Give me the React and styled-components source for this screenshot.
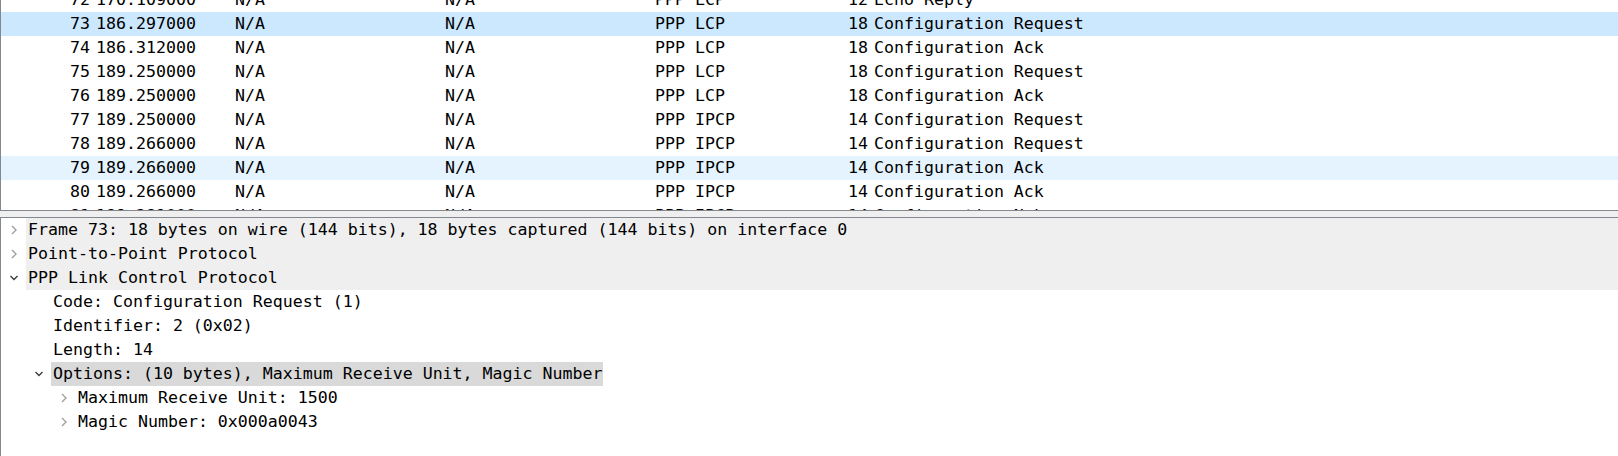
import React from "react";
import styled, { createGlobalStyle } from "styled-components";

const packets = [
  { no: 72, time: "170.109000", src: "N/A", dst: "N/A", proto: "PPP LCP", len: 12, info: "Echo Reply" },
  { no: 73, time: "186.297000", src: "N/A", dst: "N/A", proto: "PPP LCP", len: 18, info: "Configuration Request", state: "selected" },
  { no: 74, time: "186.312000", src: "N/A", dst: "N/A", proto: "PPP LCP", len: 18, info: "Configuration Ack" },
  { no: 75, time: "189.250000", src: "N/A", dst: "N/A", proto: "PPP LCP", len: 18, info: "Configuration Request" },
  { no: 76, time: "189.250000", src: "N/A", dst: "N/A", proto: "PPP LCP", len: 18, info: "Configuration Ack" },
  { no: 77, time: "189.250000", src: "N/A", dst: "N/A", proto: "PPP IPCP", len: 14, info: "Configuration Request" },
  { no: 78, time: "189.266000", src: "N/A", dst: "N/A", proto: "PPP IPCP", len: 14, info: "Configuration Request" },
  { no: 79, time: "189.266000", src: "N/A", dst: "N/A", proto: "PPP IPCP", len: 14, info: "Configuration Ack", state: "hover" },
  { no: 80, time: "189.266000", src: "N/A", dst: "N/A", proto: "PPP IPCP", len: 14, info: "Configuration Ack" },
  { no: 81, time: "189.281000", src: "N/A", dst: "N/A", proto: "PPP IPCP", len: 14, info: "Configuration Nak" },
];

const tree = [
  { level: 0, arrow: "closed", tone: "section", text: "Frame 73: 18 bytes on wire (144 bits), 18 bytes captured (144 bits) on interface 0" },
  { level: 0, arrow: "closed", tone: "section", text: "Point-to-Point Protocol" },
  { level: 0, arrow: "open", tone: "section", text: "PPP Link Control Protocol" },
  { level: 1, text: "Code: Configuration Request (1)" },
  { level: 1, text: "Identifier: 2 (0x02)" },
  { level: 1, text: "Length: 14" },
  { level: 1, arrow: "open", tone: "selected", text: "Options: (10 bytes), Maximum Receive Unit, Magic Number" },
  { level: 2, arrow: "closed", text: "Maximum Receive Unit: 1500" },
  { level: 2, arrow: "closed", text: "Magic Number: 0x000a0043" },
];

const rowColors = {
  selected: "#cce8ff",
  hover: "#e5f3ff",
};

const toneColors = {
  section: "#efefef",
  selected: "#d9d9d9",
};

const GlobalStyle = createGlobalStyle`
  html, body {
    margin: 0;
    padding: 0;
    background: #ffffff;
    overflow: hidden;
  }
  body {
    font-family: "DejaVu Sans Mono", "Liberation Mono", monospace;
    font-size: 16.6px;
    color: #000000;
  }
`;

const Window = styled.div`
  width: 1618px;
  height: 456px;
  display: flex;
  flex-direction: column;
  background: #efefef;
`;

const PacketPane = styled.div`
  height: 210px;
  flex: none;
  overflow: hidden;
  background: #ffffff;
  border-left: 1px solid #828790;
  border-bottom: 1px solid #828790;
`;

const PacketList = styled.div`
  margin-top: -12px;
`;

const PacketRow = styled.div`
  display: grid;
  grid-template-columns: 89px 139px 210px 210px 151px 68px 1fr;
  height: 24px;
  line-height: 24px;
  white-space: pre;
  background: ${(p) => rowColors[p.$state] || "transparent"};
`;

const Cell = styled.div`
  padding-left: ${(p) => (p.$right ? "0" : "6px")};
  text-align: ${(p) => (p.$right ? "right" : "left")};
  overflow: hidden;
`;

const Splitter = styled.div`
  height: 6px;
  flex: none;
  background: #efefef;
`;

const DetailPane = styled.div`
  flex: 1;
  overflow: hidden;
  background: #ffffff;
  border-left: 1px solid #828790;
  border-top: 1px solid #828790;
`;

const TreeRow = styled.div`
  display: flex;
  height: 24px;
  line-height: 24px;
  padding-left: ${(p) => p.$level * 25}px;
  white-space: pre;
`;

const Toggle = styled.div`
  width: 25px;
  flex: none;
  display: flex;
  align-items: center;
  justify-content: center;
`;

const Label = styled.div`
  padding: 0 1px 0 2px;
  flex: ${(p) => (p.$tone === "section" ? "1" : "none")};
  background: ${(p) => toneColors[p.$tone] || "transparent"};
`;

const Chevron = ({ open }) =>
  open ? (
    <svg width="10" height="8" viewBox="0 0 10 8">
      <polyline points="1.5,2 5,5.5 8.5,2" fill="none" stroke="#3c3c3c" strokeWidth="1.4" />
    </svg>
  ) : (
    <svg width="8" height="12" viewBox="0 0 8 12">
      <polyline points="2,2 6,6 2,10" fill="none" stroke="#a0a0a0" strokeWidth="1.4" />
    </svg>
  );

export default function App() {
  return (
    <>
      <GlobalStyle />
      <Window>
        <PacketPane>
          <PacketList>
            {packets.map((p) => (
              <PacketRow key={p.no} $state={p.state}>
                <Cell $right>{p.no}</Cell>
                <Cell>{p.time}</Cell>
                <Cell>{p.src}</Cell>
                <Cell>{p.dst}</Cell>
                <Cell>{p.proto}</Cell>
                <Cell $right>{p.len}</Cell>
                <Cell>{p.info}</Cell>
              </PacketRow>
            ))}
          </PacketList>
        </PacketPane>
        <Splitter />
        <DetailPane>
          {tree.map((t, i) => (
            <TreeRow key={i} $level={t.level}>
              <Toggle>{t.arrow && <Chevron open={t.arrow === "open"} />}</Toggle>
              <Label $tone={t.tone}>{t.text}</Label>
            </TreeRow>
          ))}
        </DetailPane>
      </Window>
    </>
  );
}
